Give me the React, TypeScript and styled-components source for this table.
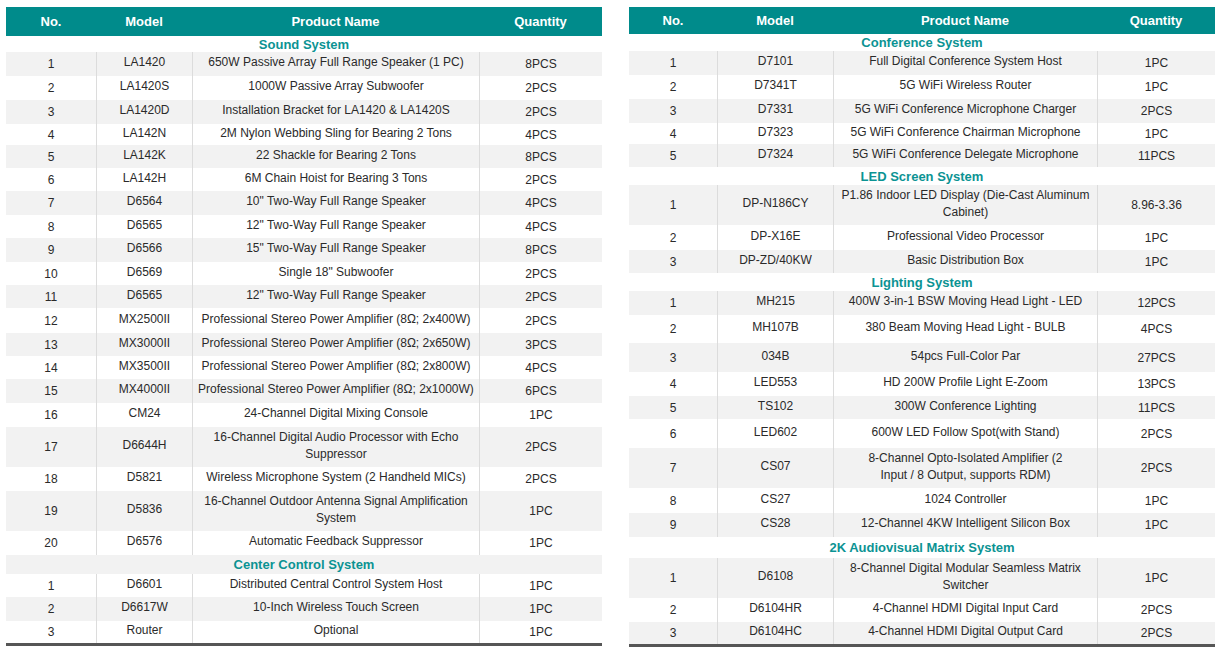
import styled, { createGlobalStyle } from "styled-components";

interface Item {
  no: number;
  model: string;
  name: string;
  qty: string;
  h: number;
}

interface Section {
  title: string;
  h: number;
  items: Item[];
}

interface Sheet {
  widths: number[];
  headH: number;
  sections: Section[];
}

const GlobalStyle = createGlobalStyle`
  html, body {
    margin: 0;
    padding: 0;
    background: #ffffff;
  }
  body {
    font-family: "Liberation Sans", Arial, sans-serif;
  }
`;

const row = (no: number, model: string, name: string, qty: string, h = 24): Item => ({
  no,
  model,
  name,
  qty,
  h,
});

const leftSheet: Sheet = {
  widths: [90, 96, 287, 123],
  headH: 29,
  sections: [
    {
      title: "Sound System",
      h: 16,
      items: [
        row(1, "LA1420", "650W Passive Array Full Range Speaker (1 PC)", "8PCS"),
        row(2, "LA1420S", "1000W Passive Array Subwoofer", "2PCS"),
        row(3, "LA1420D", "Installation Bracket for LA1420 & LA1420S", "2PCS"),
        row(4, "LA142N", "2M Nylon Webbing Sling for Bearing 2 Tons", "4PCS", 21),
        row(5, "LA142K", "22 Shackle for Bearing 2 Tons", "8PCS", 23),
        row(6, "LA142H", "6M Chain Hoist for Bearing 3 Tons", "2PCS", 23),
        row(7, "D6564", "10\" Two-Way Full Range Speaker", "4PCS"),
        row(8, "D6565", "12\" Two-Way Full Range Speaker", "4PCS", 23),
        row(9, "D6566", "15\" Two-Way Full Range Speaker", "8PCS"),
        row(10, "D6569", "Single 18\" Subwoofer", "2PCS", 23),
        row(11, "D6565", "12\" Two-Way Full Range Speaker", "2PCS", 23),
        row(12, "MX2500II", "Professional Stereo Power Amplifier (8Ω; 2x400W)", "2PCS", 25),
        row(13, "MX3000II", "Professional Stereo Power Amplifier (8Ω; 2x650W)", "3PCS", 23),
        row(14, "MX3500II", "Professional Stereo Power Amplifier (8Ω; 2x800W)", "4PCS", 23),
        row(15, "MX4000II", "Professional Stereo Power Amplifier (8Ω; 2x1000W)", "6PCS"),
        row(16, "CM24", "24-Channel Digital Mixing Console", "1PC"),
        row(17, "D6644H", "16-Channel Digital Audio Processor with Echo Suppressor", "2PCS", 40),
        row(18, "D5821", "Wireless Microphone System (2 Handheld MICs)", "2PCS"),
        row(19, "D5836", "16-Channel Outdoor Antenna Signal Amplification System", "1PC", 40),
        row(20, "D6576", "Automatic Feedback Suppressor", "1PC"),
      ],
    },
    {
      title: "Center Control System",
      h: 19,
      items: [
        row(1, "D6601", "Distributed Central Control System Host", "1PC", 23),
        row(2, "D6617W", "10-Inch Wireless Touch Screen", "1PC"),
        row(3, "Router", "Optional", "1PC", 22),
      ],
    },
  ],
};

const rightSheet: Sheet = {
  widths: [88, 116, 264, 118],
  headH: 27,
  sections: [
    {
      title: "Conference System",
      h: 17,
      items: [
        row(1, "D7101", "Full Digital Conference System Host", "1PC"),
        row(2, "D7341T", "5G WiFi Wireless Router", "1PC"),
        row(3, "D7331", "5G WiFi Conference Microphone Charger", "2PCS"),
        row(4, "D7323", "5G WiFi Conference Chairman Microphone", "1PC", 21),
        row(5, "D7324", "5G WiFi Conference Delegate Microphone", "11PCS", 23),
      ],
    },
    {
      title: "LED Screen System",
      h: 18,
      items: [
        row(1, "DP-N186CY", "P1.86 Indoor LED Display (Die-Cast Aluminum Cabinet)", "8.96-3.36", 40),
        row(2, "DP-X16E", "Professional Video Processor", "1PC", 25),
        row(3, "DP-ZD/40KW", "Basic Distribution Box", "1PC", 23),
      ],
    },
    {
      title: "Lighting System",
      h: 18,
      items: [
        row(1, "MH215", "400W 3-in-1 BSW Moving Head Light - LED", "12PCS"),
        row(2, "MH107B", "380 Beam Moving Head Light - BULB", "4PCS", 28),
        row(3, "034B", "54pcs Full-Color Par", "27PCS", 29),
        row(4, "LED553", "HD 200W Profile Light E-Zoom", "13PCS"),
        row(5, "TS102", "300W Conference Lighting", "11PCS", 23),
        row(6, "LED602", "600W LED Follow Spot(with Stand)", "2PCS", 29),
        row(7, "CS07", "8-Channel Opto-Isolated Amplifier (2\nInput / 8 Output, supports RDM)", "2PCS", 40),
        row(8, "CS27", "1024 Controller", "1PC", 25),
        row(9, "CS28", "12-Channel 4KW Intelligent Silicon Box", "1PC"),
      ],
    },
    {
      title: "2K Audiovisual Matrix System",
      h: 21,
      items: [
        row(1, "D6108", "8-Channel Digital Modular Seamless Matrix Switcher", "1PC", 40),
        row(2, "D6104HR", "4-Channel HDMI Digital Input Card", "2PCS"),
        row(3, "D6104HC", "4-Channel HDMI Digital Output Card", "2PCS", 22),
      ],
    },
  ],
};

const ProductTable: React.FC<{ sheet: Sheet }> = ({ sheet }) => (
  <Table $width={sheet.widths.reduce((a, b) => a + b, 0)}>
    <colgroup>
      {sheet.widths.map((w, i) => (
        <Col key={i} $w={w} />
      ))}
    </colgroup>
    <thead>
      <Row $h={sheet.headH}>
        <HeadCell>No.</HeadCell>
        <HeadCell>Model</HeadCell>
        <HeadCell>Product Name</HeadCell>
        <HeadCell>Quantity</HeadCell>
      </Row>
    </thead>
    <tbody>
      {sheet.sections.flatMap((section) => [
        <Row key={section.title} $h={section.h}>
          <SectionCell colSpan={4}>{section.title}</SectionCell>
        </Row>,
        ...section.items.map((item) => (
          <Row key={`${section.title}-${item.no}`} $h={item.h}>
            <NumCell>{item.no}</NumCell>
            <TextCell>{item.model}</TextCell>
            <TextCell>{item.name}</TextCell>
            <NumCell>{item.qty}</NumCell>
          </Row>
        )),
      ])}
    </tbody>
  </Table>
);

const App: React.FC = () => (
  <>
    <GlobalStyle />
    <Page>
      <ProductTable sheet={leftSheet} />
      <ProductTable sheet={rightSheet} />
    </Page>
  </>
);

const Page = styled.div`
  display: flex;
  align-items: flex-start;
  gap: 27px;
  padding: 7px 0 0 6px;
`;

const Table = styled.table<{ $width: number }>`
  width: ${(p) => p.$width}px;
  table-layout: fixed;
  border-collapse: separate;
  border-spacing: 0;
  border-bottom: 3px solid #565656;
  font-size: 12px;
  line-height: 17px;
  color: #2a2a2a;

  tbody tr:nth-child(even) {
    background: #f2f2f2;
  }
`;

const Col = styled.col<{ $w: number }>`
  width: ${(p) => p.$w}px;
`;

const Row = styled.tr<{ $h: number }>`
  height: ${(p) => p.$h}px;
`;

const HeadCell = styled.th`
  background: #008b8b;
  color: #ffffff;
  font-size: 13px;
  font-weight: bold;
  text-align: center;
  padding: 0 4px;
`;

const SectionCell = styled.td`
  text-align: center;
  padding: 0;
  color: #0b9393;
  font-size: 13px;
  font-weight: bold;
  line-height: 15px;
`;

const TextCell = styled.td`
  text-align: center;
  vertical-align: middle;
  padding: 0 4px 3px;
  border-left: 1px solid #dcdcdc;
  white-space: pre-line;
`;

const NumCell = styled(TextCell)`
  padding: 1px 4px 0;

  &:first-child {
    border-left: none;
  }
`;

export default App;
